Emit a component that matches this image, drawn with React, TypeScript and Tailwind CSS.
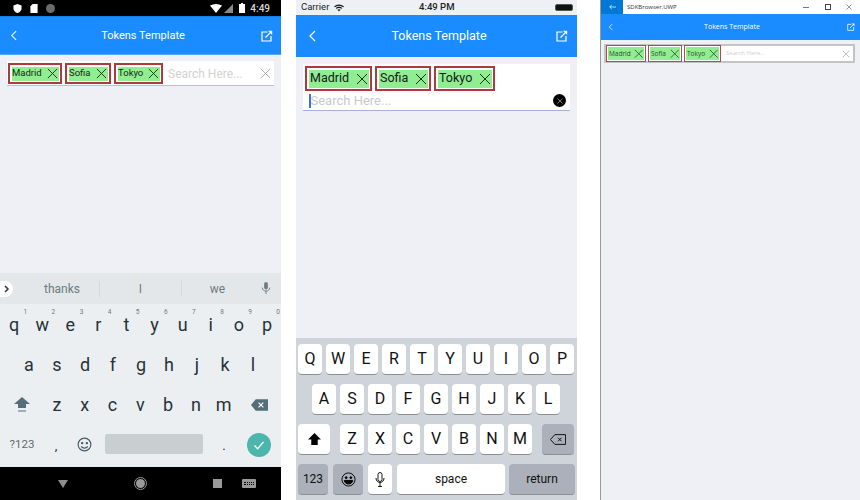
const roboto = "font-['Roboto',sans-serif]";

function Cross({ className = "" }: { className?: string }) {
  return (
    <svg viewBox="0 0 12 12" className={className} fill="none" stroke="currentColor" strokeWidth="1">
      <path d="M1 1l10 10M11 1L1 11" />
    </svg>
  );
}

function Back({ className = "" }: { className?: string }) {
  return (
    <svg viewBox="0 0 8 12" className={className} fill="none" stroke="currentColor" strokeWidth="1.2">
      <path d="M7 1L2 6l5 5" />
    </svg>
  );
}

function Share({ className = "" }: { className?: string }) {
  return (
    <svg viewBox="0 0 12 12" className={className} fill="none" stroke="currentColor" strokeWidth="1.2">
      <path d="M6.5 2H1v9h9V6" />
      <path d="M4.5 7.5L10 2" />
      <path d="M7 .8h4.2V5z" fill="currentColor" stroke="none" />
    </svg>
  );
}

const androidRows = ["qwertyuiop", "asdfghjkl", "zxcvbnm"];
const iosRows = ["QWERTYUIOP", "ASDFGHJKL", "ZXCVBNM"];

function AndroidToken({ name, w }: { name: string; w: string }) {
  return (
    <div className={`${w} h-[21px] shrink-0 border-2 border-[#ac3a3e] bg-white p-[1.5px]`}>
      <div className="flex h-full items-center justify-between bg-[#90ee90] pl-[0.5px] pr-[1px] text-[9.5px] text-[#16261a]">
        <span>{name}</span>
        <Cross className="h-[11px] w-[11px] text-[#1c2b1f]" />
      </div>
    </div>
  );
}

function IosToken({ name, w }: { name: string; w: string }) {
  return (
    <div className={`${w} h-[25px] shrink-0 border-2 border-[#ac3a3e] bg-white p-[1.5px]`}>
      <div className="flex h-full items-center justify-between bg-[#90ee90] pl-[1.5px] pr-[1px] text-[12.5px] text-[#10201a]">
        <span>{name}</span>
        <Cross className="h-[12px] w-[12px] text-[#1c2b1f]" />
      </div>
    </div>
  );
}

function UwpToken({ name, w }: { name: string; w: string }) {
  return (
    <div className={`${w} h-[17px] shrink-0 border border-[#b04a4e] bg-white p-[1px]`}>
      <div className="flex h-full items-center justify-between bg-[#90ee90] pl-[1px] pr-[1px] text-[6.5px] text-[#2a4a30]">
        <span>{name}</span>
        <Cross className="h-[9.5px] w-[9.5px] text-[#2a4a30]" />
      </div>
    </div>
  );
}

function AndroidPhone() {
  return (
    <div className={`flex h-[500px] w-[281px] shrink-0 flex-col bg-[#eff0f5] ${roboto}`}>
      <div className="flex h-[16px] items-center justify-between bg-black pl-[13px] pr-[11px]">
        <div className="flex items-center gap-[8px]">
          <svg viewBox="0 0 10 10" className="h-[9px] w-[9px] text-white" fill="currentColor">
            <path d="M5 0l4.5 1.6v3C9.5 7.4 7.6 9.2 5 10 2.4 9.2 .5 7.4 .5 4.6v-3z" />
          </svg>
          <svg viewBox="0 0 8 10" className="h-[9px] w-[8px] text-white" fill="currentColor">
            <path d="M2.5 0h5.5v10H0V2.5z" />
          </svg>
          <div className="h-[9px] w-[9px] rounded-full bg-[#6b6b6b]" />
        </div>
        <div className="flex items-center gap-[2px]">
          <svg viewBox="0 0 12 9" className="h-[9px] w-[12px] text-white" fill="currentColor">
            <path d="M0 1.5Q6-1.5 12 1.5L6 9z" />
          </svg>
          <svg viewBox="0 0 9 9" className="h-[9px] w-[9px]" fill="#8a8a8a">
            <path d="M9 0v9H0z" />
          </svg>
          <svg viewBox="0 0 6 10" className="ml-[4px] h-[10px] w-[6px] text-white" fill="currentColor">
            <path d="M2 0h2v1h2v9H0V1h2z" />
          </svg>
          <span className="ml-[3px] text-[10px] font-medium text-[#d8d8d8]">4:49</span>
        </div>
      </div>
      <div className="flex h-[39px] items-center justify-between border-y border-t-[#0f7fe8] border-b-[#4aa8ff] bg-[#1a8cff] pl-[10px] pr-[8px] text-white">
        <Back className="h-[11px] w-[7px]" />
        <span className="ml-[8px] mt-[2px] text-[11px]">Tokens Template</span>
        <Share className="h-[12px] w-[12px]" />
      </div>
      <div className="flex-1 px-[7px] pt-[6px]">
        <div className="flex h-[25px] items-center gap-[3px] border-b border-[#9dd0cc] bg-white pl-[1px] pr-[3px] pt-[1px]">
          <AndroidToken name="Madrid" w="w-[54px]" />
          <AndroidToken name="Sofia" w="w-[46px]" />
          <AndroidToken name="Tokyo" w="w-[49px]" />
          <span className="ml-[2px] flex-1 text-[12px] text-[#d2d2d2]">Search Here...</span>
          <Cross className="h-[11px] w-[11px] text-[#a8a8a8]" />
        </div>
      </div>
      <div className="flex h-[194px] flex-col bg-[#eceff1] text-[#263238]">
        <div className="relative flex h-[31px] items-center bg-[#e3e7ea] text-[12px] text-[#6f7b80]">
          <div className="absolute left-0 top-[8px] flex h-[16px] w-[13px] items-center justify-center rounded-r-full bg-white">
            <svg viewBox="0 0 6 8" className="h-[8px] w-[6px] text-[#333]" fill="none" stroke="currentColor" strokeWidth="1.5">
              <path d="M1 1l3 3-3 3" />
            </svg>
          </div>
          <span className="w-[99px] pl-[25px] text-center">thanks</span>
          <div className="h-[16px] w-px bg-[#d4d9dc]" />
          <span className="w-[81px] text-center">I</span>
          <div className="h-[16px] w-px bg-[#d4d9dc]" />
          <span className="w-[71px] text-center">we</span>
          <svg viewBox="0 0 10 14" className="ml-[8px] h-[13px] w-[10px] text-[#6f7b80]" fill="currentColor">
            <rect x="3" y="0" width="4" height="8" rx="2" />
            <path d="M1 6c0 5 8 5 8 0" fill="none" stroke="currentColor" />
            <path d="M5 9.5V13" stroke="currentColor" />
          </svg>
        </div>
        <div className="grid h-[41px] grid-cols-10 items-center pt-[1px]">
          {androidRows[0].split("").map((k, i) => (
            <div key={k} className="relative text-center text-[18px] leading-none">
              {k}
              <span className="absolute right-[1px] top-[-7px] text-[6.5px] text-[#70787d]">{(i + 1) % 10}</span>
            </div>
          ))}
        </div>
        <div className="flex h-[39px] items-center pl-[15px]">
          {androidRows[1].split("").map((k) => (
            <div key={k} className="w-[28px] text-center text-[18px] leading-none">{k}</div>
          ))}
        </div>
        <div className="flex h-[41px] items-center">
          <div className="flex w-[43px] justify-center">
            <svg viewBox="0 0 16 15" className="h-[15px] w-[16px] text-[#546e7a]" fill="currentColor">
              <path d="M8 0l8 7h-4v4H4V7H0z" />
              <path d="M4 13.5h8v1H4z" />
            </svg>
          </div>
          <div className="flex flex-1">
            {androidRows[2].split("").map((k) => (
              <div key={k} className="w-[27.8px] text-center text-[18px] leading-none">{k}</div>
            ))}
          </div>
          <div className="flex w-[43px] justify-center">
            <svg viewBox="0 0 18 12" className="h-[12px] w-[17px] text-[#546e7a]" fill="currentColor">
              <path d="M5 0h13v12H5L0 6z" />
              <path d="M8 3.5l5 5M13 3.5l-5 5" stroke="#fff" strokeWidth="1.2" />
            </svg>
          </div>
        </div>
        <div className="flex h-[42px] items-start pt-[8px]">
          <span className="mt-[3px] w-[44px] text-center text-[11.5px] text-[#5d6b72]">?123</span>
          <span className="mt-[3px] w-[24px] text-center text-[13px]">,</span>
          <svg viewBox="0 0 16 16" className="ml-[9px] mt-[4px] h-[15px] w-[15px] text-[#455a64]" fill="none" stroke="currentColor" strokeWidth="1.2">
            <circle cx="8" cy="8" r="6.8" />
            <circle cx="5.5" cy="6.5" r="0.7" fill="currentColor" />
            <circle cx="10.5" cy="6.5" r="0.7" fill="currentColor" />
            <path d="M4.5 10c1.5 2.5 5.5 2.5 7 0" />
          </svg>
          <div className="ml-[13px] mt-[1px] h-[20px] w-[98px] rounded-[2px] bg-[#c9ced1]" />
          <span className="mt-[3px] w-[42px] text-center text-[13px]">.</span>
          <div className="ml-[2px] flex h-[24px] w-[24px] items-center justify-center rounded-full bg-[#4db6ac]">
            <svg viewBox="0 0 12 10" className="h-[9px] w-[12px] text-white" fill="none" stroke="currentColor" strokeWidth="1.5">
              <path d="M1 5l3.5 3.5L11 1" />
            </svg>
          </div>
        </div>
      </div>
      <div className="flex h-[33px] items-center bg-black pl-[58px]">
        <svg viewBox="0 0 10 8" className="h-[8px] w-[10px]" fill="#8e8e8e">
          <path d="M0 0h10L5 8z" />
        </svg>
        <div className="ml-[66px] flex h-[13px] w-[13px] items-center justify-center rounded-full border border-[#9a9a9a]">
          <div className="h-[9px] w-[9px] rounded-full bg-[#9a9a9a]" />
        </div>
        <div className="ml-[66px] h-[9px] w-[9px] bg-[#9a9a9a]" />
        <div className="ml-[20px] flex h-[9px] w-[14px] items-center justify-center rounded-[1px] bg-[#9a9a9a]">
          <div className="h-[3px] w-[10px] border-y border-dotted border-black" />
        </div>
      </div>
    </div>
  );
}

function IosKey({ label, className = "" }: { label: React.ReactNode; className?: string }) {
  return (
    <div className={`flex h-[31px] items-center justify-center rounded-[4px] border-b border-[#8b8f96] text-[#111] ${className}`}>
      {label}
    </div>
  );
}

function IosPhone() {
  return (
    <div className={`ml-[15px] flex h-[500px] w-[281px] shrink-0 flex-col bg-[#eff0f5] ${roboto}`}>
      <div className="relative flex h-[15px] items-center pl-[5px] text-[9.5px] text-[#222]">
        <span>Carrier</span>
        <svg viewBox="0 0 12 9" className="ml-[5px] h-[8px] w-[10px] text-[#111]" fill="none" stroke="currentColor" strokeWidth="1.3">
          <path d="M.5 3Q6-1 11.5 3M2.5 5Q6 2.5 9.5 5" />
          <path d="M4 6.5Q6 5.2 8 6.5L6 8.5z" fill="currentColor" stroke="none" />
        </svg>
        <span className="absolute left-[123px] font-medium">4:49 PM</span>
        <div className="absolute right-[4px] top-[4px] h-[7px] w-[18px] rounded-[2px] border border-[#555] bg-[#111]" />
      </div>
      <div className="flex h-[42px] items-center justify-between bg-[#1a8cff] pl-[12px] pr-[9px] text-white">
        <Back className="h-[12px] w-[8px]" />
        <span className="ml-[6px] text-[12.5px]">Tokens Template</span>
        <Share className="h-[12px] w-[12px]" />
      </div>
      <div className="flex-1 px-[7px] pt-[7px]">
        <div className="h-[47px] border-b border-[#9fb4dc] bg-white px-[2px] pt-[2px]">
          <div className="flex gap-[3px]">
            <IosToken name="Madrid" w="w-[67px]" />
            <IosToken name="Sofia" w="w-[56px]" />
            <IosToken name="Tokyo" w="w-[61px]" />
          </div>
          <div className="mt-[1px] flex h-[17px] items-center">
            <div className="ml-[4px] h-[14px] w-[1.5px] bg-[#3f6fe0]" />
            <span className="flex-1 text-[13px] text-[#c9c9ce]">Search Here...</span>
            <div className="mr-[2px] flex h-[13px] w-[13px] items-center justify-center rounded-full bg-black">
              <Cross className="h-[6px] w-[6px] text-white" />
            </div>
          </div>
        </div>
      </div>
      <div className="flex h-[162px] flex-col gap-[9px] bg-[#cfd3da] px-[2px] pt-[6px] text-[16px]">
        <div className="flex gap-[4px]">
          {iosRows[0].split("").map((k) => (
            <IosKey key={k} label={k} className="w-[24px] bg-white" />
          ))}
        </div>
        <div className="flex gap-[4px] px-[14px]">
          {iosRows[1].split("").map((k) => (
            <IosKey key={k} label={k} className="w-[24px] bg-white" />
          ))}
        </div>
        <div className="flex gap-[4px]">
          <IosKey
            className="mr-[6px] w-[32px] bg-white"
            label={
              <svg viewBox="0 0 14 13" className="h-[12px] w-[13px] text-black" fill="currentColor">
                <path d="M7 0l7 7h-3.5v6h-7V7H0z" />
              </svg>
            }
          />
          {iosRows[2].split("").map((k) => (
            <IosKey key={k} label={k} className="w-[24px] bg-white" />
          ))}
          <IosKey
            className="ml-[6px] w-[32px] bg-[#abb0ba]"
            label={
              <svg viewBox="0 0 18 12" className="h-[11px] w-[16px] text-black" fill="none" stroke="currentColor" strokeWidth="1">
                <path d="M5.5 .5h12v11h-12L.5 6z" />
                <path d="M9 4l4 4M13 4l-4 4" />
              </svg>
            }
          />
        </div>
        <div className="flex gap-[5px]">
          <IosKey label="123" className="w-[30px] bg-[#abb0ba] text-[12px]" />
          <IosKey
            className="w-[30px] bg-[#abb0ba]"
            label={
              <svg viewBox="0 0 16 16" className="h-[15px] w-[15px] text-black" fill="none" stroke="currentColor">
                <circle cx="8" cy="8" r="7" />
                <circle cx="5.5" cy="6" r="1" fill="currentColor" />
                <circle cx="10.5" cy="6" r="1" fill="currentColor" />
                <path d="M3.5 9h9c-.5 5-8.5 5-9 0z" fill="currentColor" />
              </svg>
            }
          />
          <IosKey
            className="w-[24px] bg-white"
            label={
              <svg viewBox="0 0 10 15" className="h-[15px] w-[10px] text-black" fill="none" stroke="currentColor" strokeWidth="0.9">
                <rect x="3" y=".5" width="4" height="9" rx="2" />
                <path d="M1 6c0 6 8 6 8 0M5 11v3.5M3 14.5h4" />
              </svg>
            }
          />
          <IosKey label="space" className="w-[108px] bg-white text-[12px]" />
          <IosKey label="return" className="-ml-px w-[66px] bg-[#abb0ba] text-[12px]" />
        </div>
      </div>
    </div>
  );
}

function UwpWindow() {
  return (
    <div className="ml-[23px] flex h-[500px] w-[260px] shrink-0 flex-col border-l border-[#9a9a9a] bg-[#eff0f5] font-['Open_Sans',sans-serif]">
      <div className="flex h-[14px] items-center bg-white text-[6px] text-[#333]">
        <div className="flex h-full w-[22px] items-center justify-center bg-[#0078d7] text-white">
          <svg viewBox="0 0 10 8" className="h-[6px] w-[7px]" fill="none" stroke="currentColor">
            <path d="M10 4H1M4 1L1 4l3 3" />
          </svg>
        </div>
        <span className="ml-[4px] flex-1">SDKBrowser.UWP</span>
        <div className="h-px w-[6px] bg-[#777]" />
        <div className="ml-[16px] h-[6px] w-[6px] border border-[#444]" />
        <Cross className="ml-[15px] mr-[8px] h-[6px] w-[6px] text-[#333]" />
      </div>
      <div className="flex h-[26px] items-center justify-between bg-[#1a8cff] pl-[7px] pr-[5px] text-white">
        <Back className="h-[8px] w-[5px]" />
        <span className="ml-[4px] text-[7px]">Tokens Template</span>
        <Share className="h-[8px] w-[8px]" />
      </div>
      <div className="pl-[3px] pr-[5px] pt-[4px]">
        <div className="flex h-[19px] items-center gap-[2px] border-2 border-[#c4c4c4] bg-white pr-[3px]">
          <UwpToken name="Madrid" w="w-[40px]" />
          <UwpToken name="Sofia" w="w-[34px]" />
          <UwpToken name="Tokyo" w="w-[37px]" />
          <span className="ml-[3px] flex-1 text-[6px] text-[#d0d0d0]">Search Here...</span>
          <Cross className="h-[8px] w-[8px] text-[#a0a0a0]" />
        </div>
      </div>
    </div>
  );
}

export default function App() {
  return (
    <div className="flex h-[500px] w-[860px] overflow-hidden bg-white">
      <AndroidPhone />
      <IosPhone />
      <UwpWindow />
    </div>
  );
}
